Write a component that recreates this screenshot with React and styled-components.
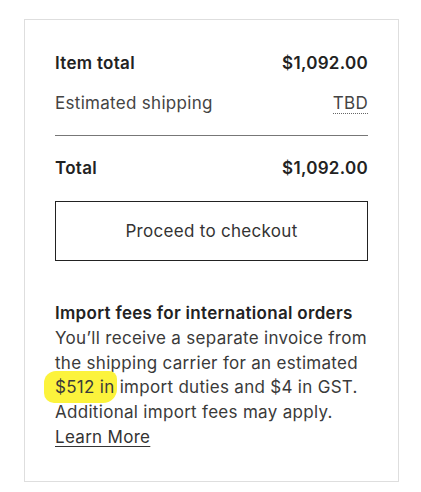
import React from 'react';
import styled, { createGlobalStyle } from 'styled-components';

const GlobalStyle = createGlobalStyle`
  html, body {
    margin: 0;
    padding: 0;
    background: #fff;
  }
  body {
    font-family: Inter, "Open Sans", Arial, sans-serif;
    color: #222;
  }
`

const Page = styled.div`
  padding: 19px 23px 10px 24px;
`

const Card = styled.div`
  border: 1px solid #dedede;
  padding: 23px 30px 31px 30px;
  box-sizing: border-box;
  width: 375px;
`

const Row = styled.div`
  display: flex;
  justify-content: space-between;
  align-items: center;
  height: 40px;
  font-size: 17px;
  letter-spacing: 0.3px;
  font-weight: ${({ bold }) => bold ? 600 : 400};
  color: ${({ bold }) => bold ? '#222' : '#444'};
`

const Dotted = styled.span`
  border-bottom: 1px dotted #666;
  line-height: 20px;
`

const Divider = styled.hr`
  border: none;
  border-top: 1px solid #777;
  margin: 12px 0 12px;
`

const Button = styled.button`
  display: block;
  width: 100%;
  height: 60px;
  margin-top: 13px;
  border: 1px solid #222;
  background: #fff;
  font-family: inherit;
  font-size: 17px;
  letter-spacing: 0.3px;
  color: #333;
  cursor: pointer;
`

const Notice = styled.div`
  margin-top: 40px;
  font-size: 17px;
  letter-spacing: 0.3px;
  line-height: 24.8px;
  color: #3a3a3a;
`

const NoticeTitle = styled.div`
  font-weight: 600;
  color: #222;
`

const Highlight = styled.span`
  background: #fcf33c;
  border-radius: 12px 8px 14px 10px;
  padding: 6px 2px 6px 11px;
  margin-left: -11px;
  margin-right: -2px;
`

const Link = styled.a`
  color: #333;
  text-decoration: underline;
  text-underline-offset: 3px;
`

export default function App() {
  return (
    <>
      <GlobalStyle />
      <Page>
        <Card>
          <Row bold>
            <span>Item total</span>
            <span>$1,092.00</span>
          </Row>
          <Row>
            <span>Estimated shipping</span>
            <Dotted>TBD</Dotted>
          </Row>
          <Divider />
          <Row bold>
            <span>Total</span>
            <span>$1,092.00</span>
          </Row>
          <Button>Proceed to checkout</Button>
          <Notice>
            <NoticeTitle>Import fees for international orders</NoticeTitle>
            You’ll receive a separate invoice from the shipping carrier for an estimated{' '}
            <Highlight>$512 in</Highlight> import duties and $4 in GST. Additional import fees may apply.
            <br />
            <Link href="#">Learn More</Link>
          </Notice>
        </Card>
      </Page>
    </>
  );
}
